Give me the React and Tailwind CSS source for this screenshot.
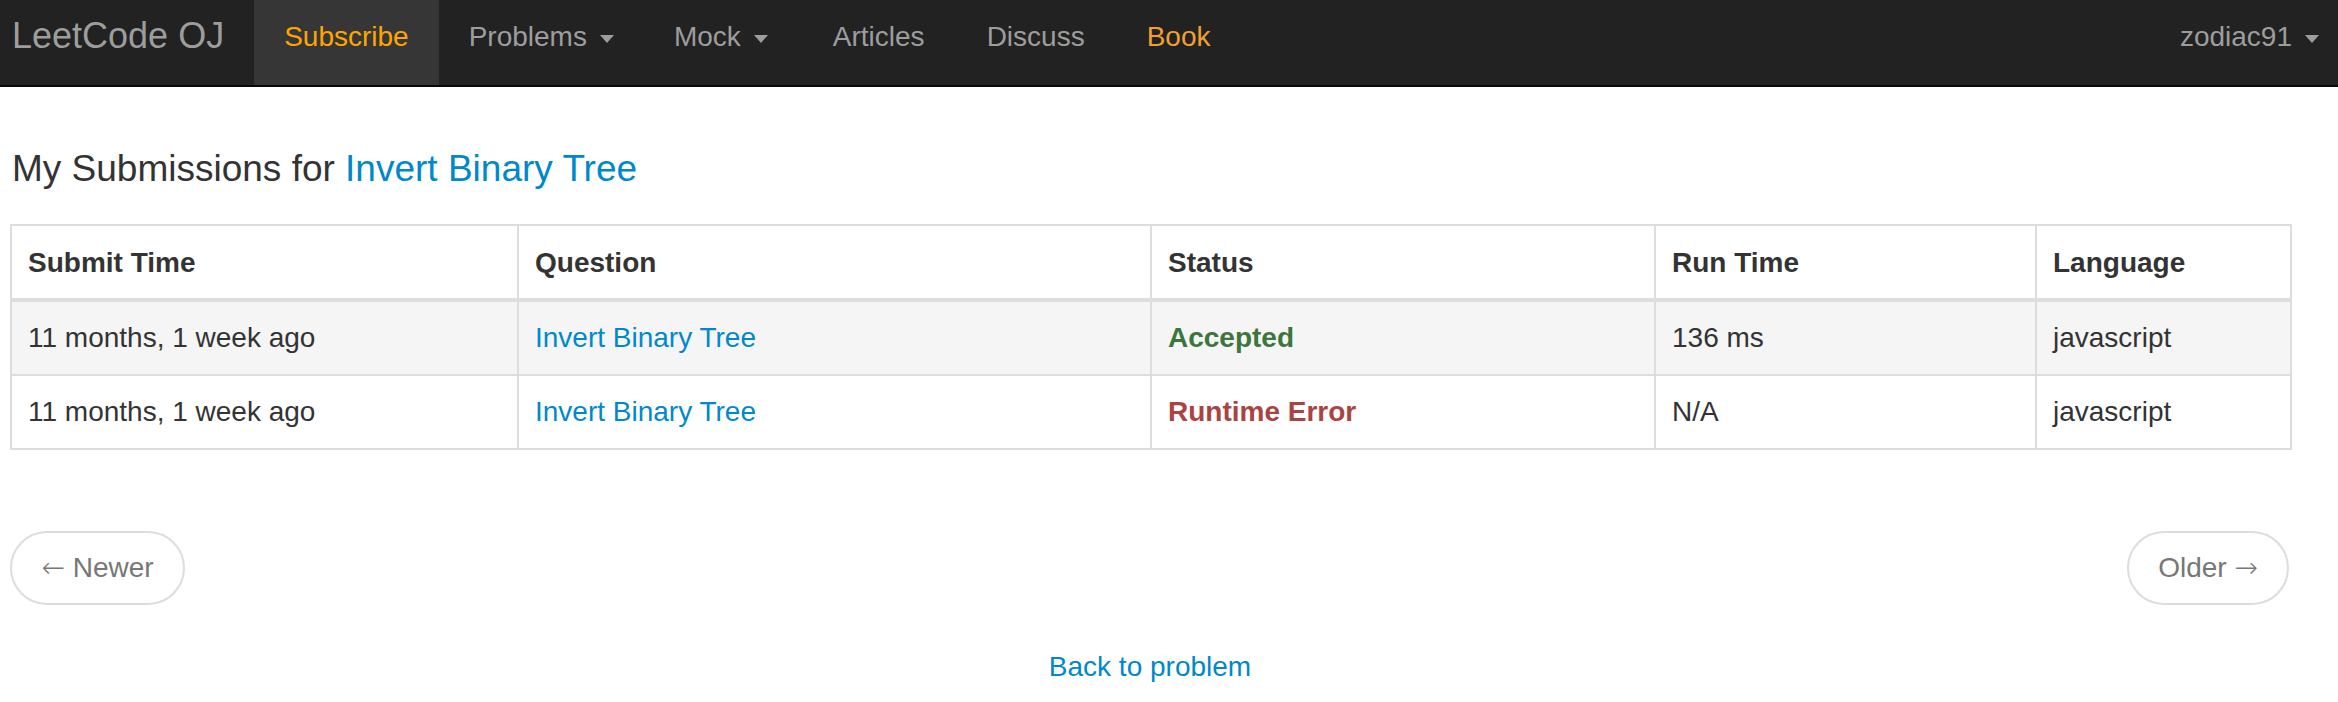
import React from 'react';

const font = { fontFamily: '"Liberation Sans", Arial, sans-serif' };

function Caret() {
  return (
    <span className="inline-block w-0 h-0 ml-[13px] align-middle border-x-[7px] border-x-transparent border-t-[8px] border-t-[#9d9d9d]" />
  );
}

function NavItem({ children, className = '' }) {
  return (
    <a className={`block h-full pl-[30px] pt-[17px] text-[28px] leading-[40px] ${className}`}>
      {children}
    </a>
  );
}

const rows = [
  {
    time: '11 months, 1 week ago',
    question: 'Invert Binary Tree',
    status: 'Accepted',
    statusClass: 'text-[#3c763d]',
    runtime: '136 ms',
    lang: 'javascript',
  },
  {
    time: '11 months, 1 week ago',
    question: 'Invert Binary Tree',
    status: 'Runtime Error',
    statusClass: 'text-[#a94442]',
    runtime: 'N/A',
    lang: 'javascript',
  },
];

export default function App() {
  return (
    <div className="min-h-[702px] bg-white text-[#333]" style={font}>
      <nav className="flex items-start h-[87px] bg-[#222] border-b-2 border-[#080808] text-[#9d9d9d]">
        <a className="block pl-[12px] pr-[30px] pt-[16px] text-[36px] leading-[40px]">LeetCode OJ</a>
        <NavItem className="pr-[30px] bg-[#363636] text-[#ffa500]">Subscribe</NavItem>
        <NavItem className="pr-[30px]">Problems<Caret /></NavItem>
        <NavItem className="pr-[35px]">Mock<Caret /></NavItem>
        <NavItem className="pr-[32px]">Articles</NavItem>
        <NavItem className="pr-[32px]">Discuss</NavItem>
        <NavItem className="pr-[30px] text-[#f0a030]">Book</NavItem>
        <a className="block ml-auto h-full pl-[30px] pr-[19px] pt-[17px] text-[28px] leading-[40px]">
          zodiac91<Caret />
        </a>
      </nav>

      <main className="w-[2280px] ml-[10px]">
        <h3 className="mt-[61px] ml-[2px] text-[37px] leading-[42px]">
          My Submissions for <a className="text-[#0088cc]">Invert Binary Tree</a>
        </h3>

        <table className="mt-[34px] w-full table-fixed border-collapse text-[28px] leading-[40px]">
          <colgroup>
            <col className="w-[507px]" />
            <col className="w-[633px]" />
            <col className="w-[504px]" />
            <col className="w-[381px]" />
            <col className="w-[255px]" />
          </colgroup>
          <thead>
            <tr>
              {['Submit Time', 'Question', 'Status', 'Run Time', 'Language'].map((h) => (
                <th
                  key={h}
                  className="border-2 border-b-4 border-[#ddd] px-[16px] pt-[17px] pb-[15px] text-left font-bold"
                >
                  {h}
                </th>
              ))}
            </tr>
          </thead>
          <tbody>
            {rows.map((r, i) => (
              <tr key={i} className={i === 0 ? 'bg-[#f5f5f5]' : 'bg-white'}>
                <td className="border-2 border-[#ddd] p-[16px]">{r.time}</td>
                <td className="border-2 border-[#ddd] p-[16px]">
                  <a className="text-[#0088cc]">{r.question}</a>
                </td>
                <td className={`border-2 border-[#ddd] p-[16px] font-bold ${r.statusClass}`}>{r.status}</td>
                <td className="border-2 border-[#ddd] p-[16px]">{r.runtime}</td>
                <td className="border-2 border-[#ddd] p-[16px]">{r.lang}</td>
              </tr>
            ))}
          </tbody>
        </table>

        <div className="mt-[81px] flex justify-between">
          <a className="flex items-center justify-center w-[175px] h-[74px] rounded-full border-2 border-[#ddd] bg-white text-[28px] leading-[40px] text-[#777]">
            <span className="font-['DejaVu_Sans',sans-serif] font-light">←</span>&nbsp;Newer
          </a>
          <a className="flex items-center justify-center w-[162px] h-[74px] mr-[1px] rounded-full border-2 border-[#ddd] bg-white text-[28px] leading-[40px] text-[#777]">
            Older&nbsp;<span className="font-['DejaVu_Sans',sans-serif] font-light">→</span>
          </a>
        </div>

        <div className="mt-[42px] text-center text-[28px] leading-[40px]">
          <a className="text-[#0088cc]">Back to problem</a>
        </div>
      </main>
    </div>
  );
}
